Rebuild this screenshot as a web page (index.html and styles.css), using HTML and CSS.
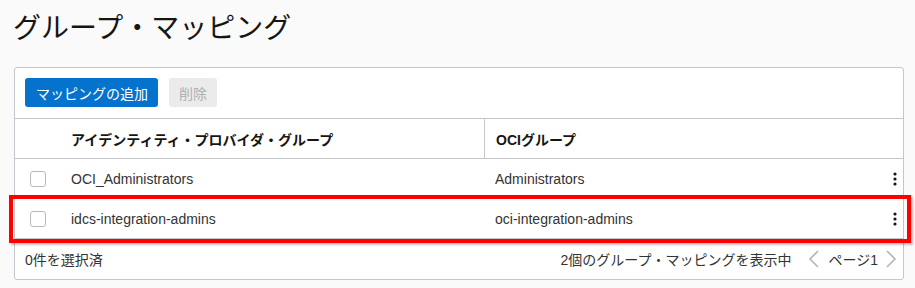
FILE: index.html
```html
<!DOCTYPE html>
<html lang="ja">
<head>
    <meta charset="UTF-8">
    <meta name="viewport" content="width=device-width, initial-scale=1.0">
    <title>グループ・マッピング</title>
    <link rel="stylesheet" href="styles.css">
</head>
<body>
    <h1 class="page-title">グループ・マッピング</h1>
    <div class="panel">
        <div class="toolbar">
            <button class="btn btn-primary">マッピングの追加</button>
            <button class="btn btn-disabled" disabled>削除</button>
        </div>
        <div class="row head-row">
            <div class="cell cell-check"></div>
            <div class="cell">アイデンティティ・プロバイダ・グループ</div>
            <div class="cell cell-divider">OCIグループ</div>
            <div class="cell cell-menu"></div>
        </div>
        <div class="row">
            <div class="cell cell-check"><span class="checkbox"></span></div>
            <div class="cell">OCI_Administrators</div>
            <div class="cell cell-pad">Administrators</div>
            <div class="cell cell-menu">
                <svg width="4" height="14" viewBox="0 0 4 14"><circle cx="2" cy="2" r="1.6"/><circle cx="2" cy="7" r="1.6"/><circle cx="2" cy="12" r="1.6"/></svg>
            </div>
        </div>
        <div class="row row-marked">
            <div class="cell cell-check"><span class="checkbox"></span></div>
            <div class="cell">idcs-integration-admins</div>
            <div class="cell cell-pad">oci-integration-admins</div>
            <div class="cell cell-menu">
                <svg width="4" height="14" viewBox="0 0 4 14"><circle cx="2" cy="2" r="1.6"/><circle cx="2" cy="7" r="1.6"/><circle cx="2" cy="12" r="1.6"/></svg>
            </div>
            <div class="highlight"></div>
        </div>
        <div class="footer">
            <span>0件を選択済</span>
            <div class="pager">
                <span class="pager-count">2個のグループ・マッピングを表示中</span>
                <svg class="chev" width="12" height="18" viewBox="0 0 12 18"><polyline points="10,1 2,9 10,17" fill="none" stroke="#b3b3b3" stroke-width="1.6"/></svg>
                <span class="pager-page">ページ1</span>
                <svg class="chev" width="12" height="18" viewBox="0 0 12 18"><polyline points="2,1 10,9 2,17" fill="none" stroke="#b3b3b3" stroke-width="1.6"/></svg>
            </div>
        </div>
    </div>
</body>
</html>
```

FILE: styles.css
```css
* {
    margin: 0;
    padding: 0;
    box-sizing: border-box;
}

body {
    background: #fafafa;
    color: #333;
    font-family: 'Liberation Sans', 'Noto Sans CJK JP', sans-serif;
    font-size: 14px;
    padding-top: 12px;
}

.page-title {
    font-size: 28px;
    font-weight: normal;
    line-height: 34px;
    color: #161513;
    margin-left: 13px;
    margin-bottom: 21px;
}

.panel {
    margin-left: 14px;
    width: 890px;
    background: #fff;
    border: 1px solid #c3c6cb;
    border-radius: 3px;
}

.toolbar {
    display: flex;
    gap: 11px;
    padding: 10px 10px 11px;
    border-bottom: 1px solid #c3c6cb;
}

.btn {
    height: 29px;
    padding: 0 10px;
    border: none;
    border-radius: 3px;
    font-family: inherit;
    font-size: 14px;
}

.btn-primary {
    background: #0572ce;
    color: #fff;
    padding-left: 11px;
}

.btn-disabled {
    background: #ebebeb;
    color: #b0b0b0;
}

.row {
    position: relative;
    display: grid;
    grid-template-columns: 56px 413px 1fr 30px;
    height: 40px;
    border-bottom: 1px solid #c3c6cb;
}

.cell {
    display: flex;
    align-items: center;
    white-space: nowrap;
}

.head-row {
    font-weight: bold;
    color: #161513;
}

.cell-check {
    padding-left: 15px;
}

.cell-divider {
    border-left: 1px solid #c3c6cb;
    padding-left: 11px;
}

.cell-pad {
    padding-left: 11px;
}

.cell-menu {
    justify-content: flex-start;
    padding-left: 20px;
    fill: #161513;
}

.checkbox {
    width: 16px;
    height: 16px;
    border: 1px solid #b5b8bc;
    border-radius: 3px;
    background: #fff;
}

.highlight {
    position: absolute;
    left: -6px;
    right: -8px;
    top: -4px;
    bottom: -5px;
    border: 4px solid #ff0000;
    box-shadow: 2px 2px 2px rgba(0, 0, 0, 0.25);
    pointer-events: none;
}

.footer {
    display: flex;
    justify-content: space-between;
    align-items: center;
    height: 40px;
    padding: 0 6px 0 10px;
}

.pager {
    display: flex;
    align-items: center;
}

.pager-count {
    margin-right: 17px;
}

.pager-page {
    margin: 0 7px 0 8px;
}
```
